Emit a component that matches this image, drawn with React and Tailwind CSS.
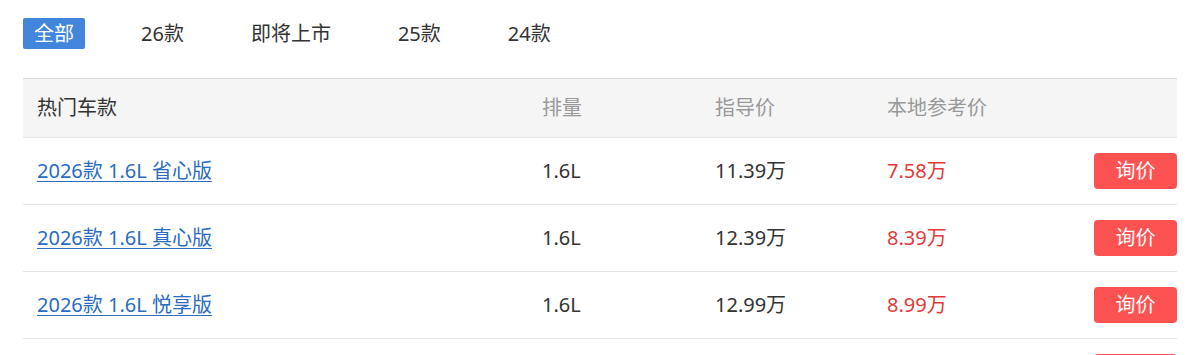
import React, { useState } from "react";

const tabs = ["全部", "26款", "即将上市", "25款", "24款"];

const cars = [
  { name: "2026款 1.6L 省心版", disp: "1.6L", guide: "11.39万", local: "7.58万" },
  { name: "2026款 1.6L 真心版", disp: "1.6L", guide: "12.39万", local: "8.39万" },
  { name: "2026款 1.6L 悦享版", disp: "1.6L", guide: "12.99万", local: "8.99万" },
  { name: "2026款 1.6L 尊享版", disp: "1.6L", guide: "13.59万", local: "9.59万" },
];

const App = () => {
  const [active, setActive] = useState(0);

  return (
    <div className="min-h-screen bg-white px-[23px] pt-[18px] text-[20px] text-[#333] font-['Noto_Sans','Noto_Sans_CJK_SC',sans-serif]">
      {/* ------- tabs ------- */}
      <div className="flex items-center gap-[45px]">
        {tabs.map((t, i) => (
          <button
            key={t}
            onClick={() => setActive(i)}
            className={`h-[31px] px-[11px] rounded-[2px] leading-[31px] ${
              i === active ? "bg-[#4186dc] text-white" : "text-[#333]"
            }`}
          >
            {t}
          </button>
        ))}
      </div>

      {/* ------- table ------- */}
      <div className="mt-[29px] border-t border-[#dcdcdc]">
        <div className="grid grid-cols-[519px_173px_172px_1fr] items-center h-[59px] bg-[#f5f5f5] border-b border-[#e6e6e6] text-[#999]">
          <div className="pl-[14px] text-[#333]">热门车款</div>
          <div>排量</div>
          <div>指导价</div>
          <div>本地参考价</div>
        </div>

        {cars.map((c) => (
          <div
            key={c.name}
            className="grid grid-cols-[519px_173px_172px_1fr] items-center h-[67px] border-b border-[#e6e6e6]"
          >
            <div className="pl-[14px]">
              <a href="#" className="text-[#2a6cbf] underline underline-offset-[3px] decoration-1">
                {c.name}
              </a>
            </div>
            <div>{c.disp}</div>
            <div>{c.guide}</div>
            <div className="flex items-center justify-between">
              <span className="text-[#e33a3a]">{c.local}</span>
              <button className="w-[83px] h-[36px] rounded-[4px] bg-[#fd5252] text-white leading-[36px]">
                询价
              </button>
            </div>
          </div>
        ))}
      </div>
    </div>
  );
};

export default App;
